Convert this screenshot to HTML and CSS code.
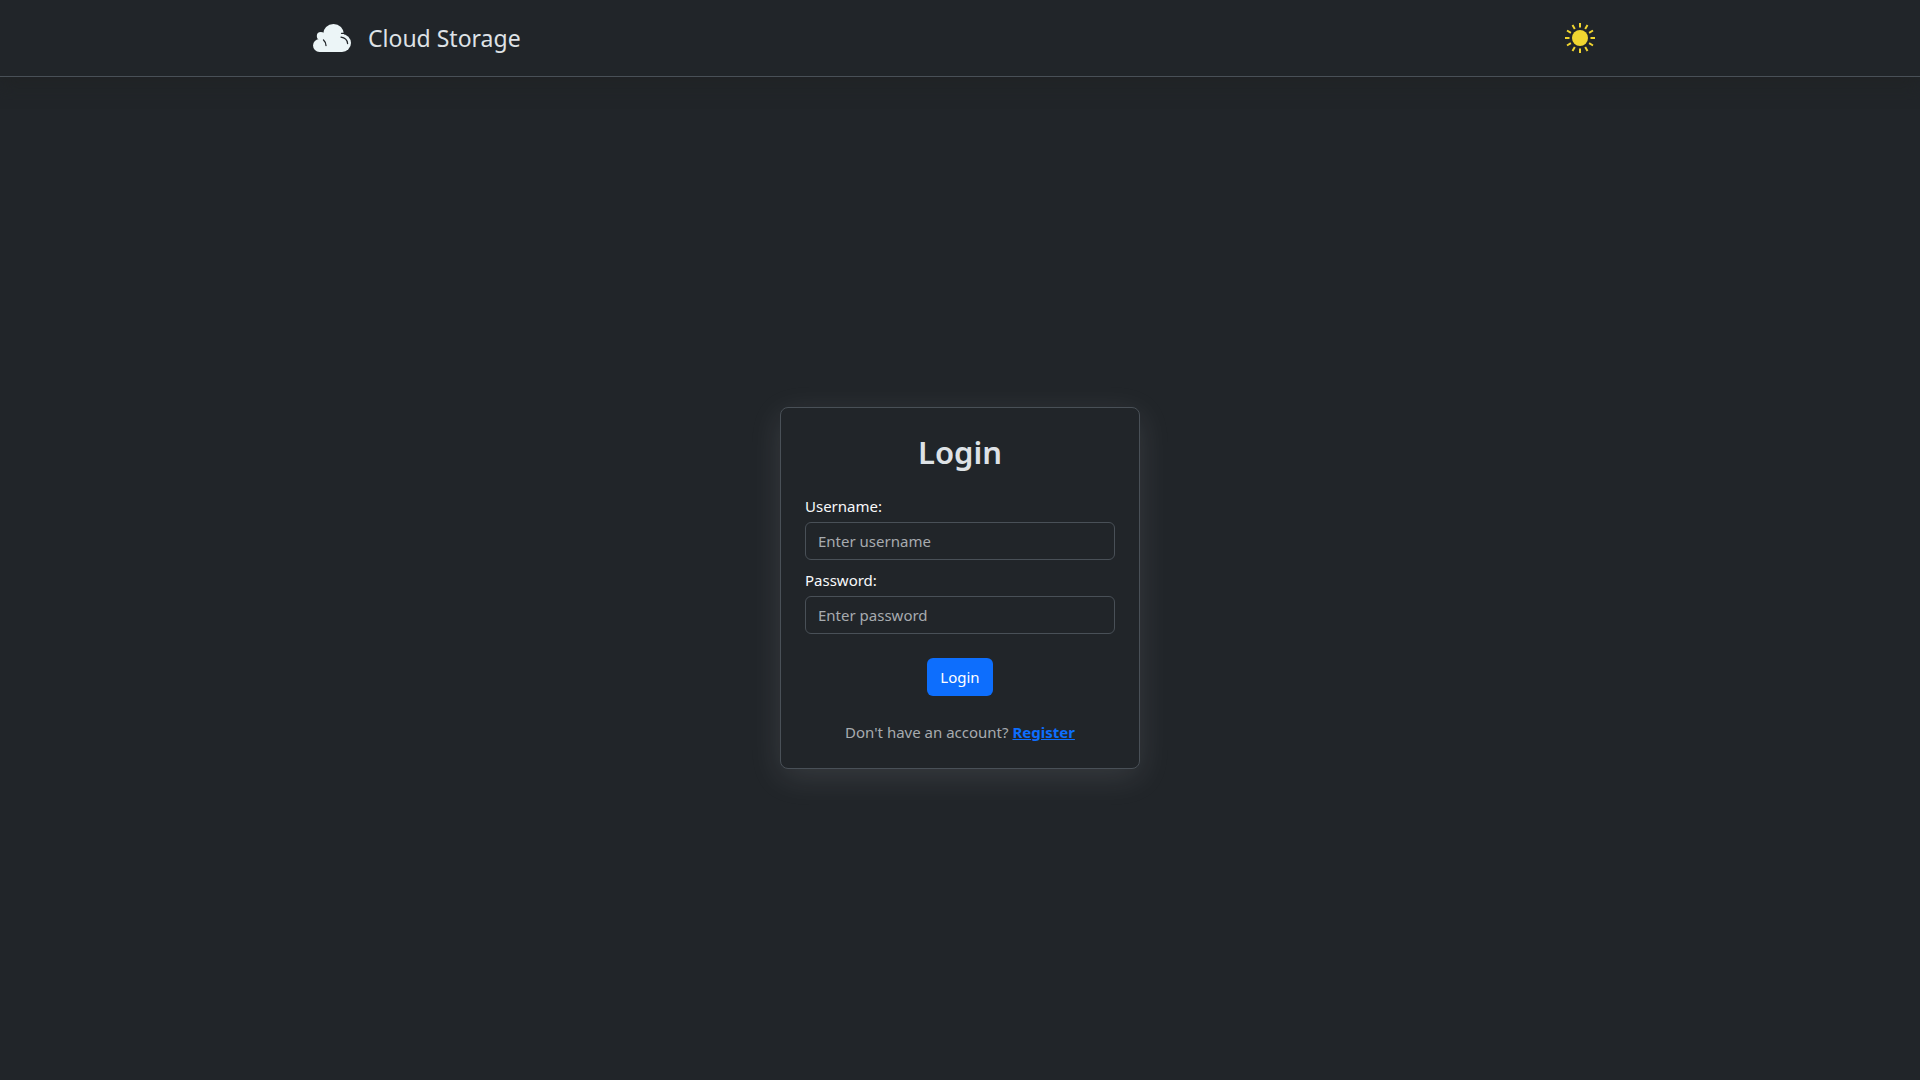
FILE: index.html
```html
<!DOCTYPE html>
<html lang="en">
<head>
<meta charset="utf-8">
<meta name="viewport" content="width=device-width, initial-scale=1">
<title>Cloud Storage</title>
<link rel="stylesheet" href="styles.css">
</head>
<body>
<header class="navbar">
  <div class="container">
    <a class="brand" href="#">
      <svg class="brand-icon" viewBox="0 0 40 40" aria-hidden="true">
        <g fill="#ecf5f7">
          <circle cx="7.500" cy="27.500" r="6.500"/>
          <circle cx="8.800" cy="18" r="4"/>
          <ellipse cx="21.500" cy="16.500" rx="10.500" ry="10.500"/>
          <circle cx="30" cy="25" r="9"/>
          <path d="M7 18h15l8 7v9H7.500Z"/>
        </g>
        <path fill="none" stroke="#22262a" stroke-width="1.300" stroke-linecap="round" d="M11.500 22q2.300 2 2.500 5.500M29 19.200q6 .8 6.600 6.300M29.500 15.300h3"/>
      </svg>
      <span>Cloud Storage</span>
    </a>
    <button class="theme-toggle" type="button" aria-label="Toggle theme">
      <svg class="theme-icon" viewBox="-16 -16 32 32" aria-hidden="true">
        <circle r="8" fill="#f0d530"/>
        <path stroke="#f0d530" stroke-width="2" d="M0-10.500V-15M0 10.500V15M-10.500 0H-15M10.500 0H15M5.200-9.100 7.500-13M9.100-5.200 13-7.500M9.100 5.200 13 7.500M5.200 9.100 7.500 13M-5.200 9.100-7.500 13M-9.100 5.200-13 7.500M-9.100-5.200-13-7.500M-5.200-9.100-7.500-13"/>
      </svg>
    </button>
  </div>
</header>
<main class="page">
  <form class="card">
    <h1 class="title">Login</h1>
    <div class="field">
      <label for="username">Username:</label>
      <input id="username" type="text" placeholder="Enter username">
    </div>
    <div class="field">
      <label for="password">Password:</label>
      <input id="password" type="password" placeholder="Enter password">
    </div>
    <button class="submit" type="submit">Login</button>
    <p class="hint">Don't have an account? <a href="#">Register</a></p>
  </form>
</main>
</body>
</html>
```
FILE: styles.css
```css
* {
  box-sizing: border-box;
}

body {
  display: flex;
  flex-direction: column;
  min-height: 100vh;
  margin: 0;
  background: #212529;
  color: #dee2e6;
  font-family: "Segoe UI", "Noto Sans", sans-serif;
  font-size: 15px;
  line-height: 24px;
}

.navbar {
  padding: 18px 0;
  border-bottom: 1px solid #495057;
  box-shadow: 0 8px 16px rgba(32, 35, 36, 0.8);
}

.container {
  display: flex;
  align-items: center;
  justify-content: space-between;
  max-width: 1320px;
  margin: 0 auto;
  padding: 0 12px;
}

.brand {
  display: flex;
  align-items: center;
  gap: 16px;
  color: #dee2e6;
  font-size: 23px;
  line-height: 40px;
  text-decoration: none;
}

.brand-icon {
  width: 40px;
  height: 40px;
}

.theme-toggle {
  display: flex;
  padding: 4px 12px;
  border: 0;
  background: none;
  cursor: pointer;
}

.theme-icon {
  width: 32px;
  height: 32px;
}

.page {
  display: flex;
  flex: 1;
  align-items: center;
  justify-content: center;
  padding-top: 18px;
}

.card {
  display: flex;
  flex-direction: column;
  gap: 8px;
  width: 100%;
  max-width: 360px;
  padding: 24px;
  border: 1px solid #495057;
  border-radius: 8px;
  background: #212529;
  box-shadow: 0 8px 32px rgba(222, 226, 230, 0.12);
}

.title {
  margin: 0 0 14px;
  font-size: 31px;
  font-weight: 600;
  line-height: 40px;
  text-align: center;
}

.field {
  display: flex;
  flex-direction: column;
  gap: 4px;
}

.field label {
  color: #f8f9fa;
}

.field input {
  height: 38px;
  padding: 6px 12px;
  border: 1px solid #495057;
  border-radius: 6px;
  background: #212529;
  color: #dee2e6;
  font: inherit;
}

.field input::placeholder {
  color: #a7abaf;
  opacity: 1;
}

.submit {
  align-self: center;
  height: 38px;
  margin: 16px 0;
  padding: 0 13px;
  border: 0;
  border-radius: 6px;
  background: #0d6efd;
  color: #fff;
  font: inherit;
  cursor: pointer;
}

.hint {
  margin: 0;
  color: #a7abaf;
  text-align: center;
}

.hint a {
  color: #0d6efd;
  font-weight: 700;
}
```
